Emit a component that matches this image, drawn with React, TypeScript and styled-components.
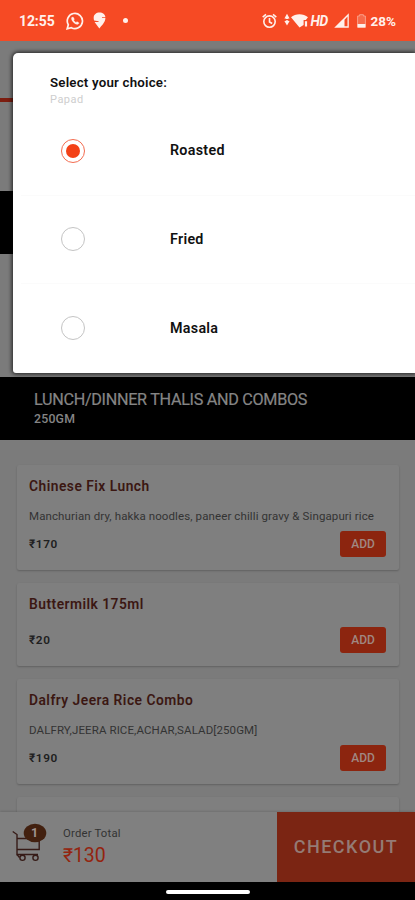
import React from "react";
import styled, { createGlobalStyle } from "styled-components";

const GlobalStyle = createGlobalStyle`
  * { box-sizing: border-box; }
  body { margin: 0; background: #7b7b7b; font-family: Roboto, "Liberation Sans", sans-serif; }
`;

const Screen = styled.div`
  position: relative;
  width: 415px;
  height: 900px;
  overflow: hidden;
  display: flex;
  flex-direction: column;
  background: #7b7b7b;
`;

const StatusBar = styled.header`
  flex: none;
  height: 41px;
  display: flex;
  align-items: center;
  padding: 0 19px 0 19px;
  background: #f64a24;
  color: #fff0eb;
  svg { display: block; flex: none; }
`;

const StatusText = styled.span<{ $size: number; $spacing?: number; $italic?: boolean; $left?: number }>`
  font-size: ${(p) => p.$size}px;
  line-height: 20px;
  font-weight: 700;
  font-style: ${(p) => (p.$italic ? "italic" : "normal")};
  letter-spacing: ${(p) => p.$spacing ?? 0}px;
  margin-left: ${(p) => p.$left ?? 0}px;
  padding-top: 1px;
`;

const StatusGroup = styled.div<{ $gap: number; $left?: number }>`
  display: flex;
  align-items: center;
  gap: ${(p) => p.$gap}px;
  margin-left: ${(p) => p.$left ?? 0}px;
`;

const StatusRight = styled.div`
  margin-left: auto;
  display: flex;
  align-items: center;
`;

const Dot = styled.span`
  width: 5px;
  height: 5px;
  border-radius: 50%;
  background: #fff0eb;
`;

const Backdrop = styled.section`
  flex: none;
  height: 336px;
  display: flex;
  flex-direction: column;
`;

const TabLine = styled.div`
  height: 4px;
  margin-top: 57px;
  background: #7c1d10;
`;

const BlackBand = styled.div`
  height: 63px;
  margin-top: 89px;
  background: #000;
`;

const SectionHeader = styled.div`
  flex: none;
  height: 63px;
  padding: 11px 34px 0;
  background: #000;
  color: #858585;
`;

const SectionTitle = styled.h2`
  margin: 0;
  font-size: 16.2px;
  line-height: 23px;
  font-weight: 400;
  letter-spacing: -0.3px;
  -webkit-text-stroke: 0.2px;
`;

const SectionSub = styled.div`
  font-size: 12.3px;
  line-height: 17px;
  font-weight: 500;
  letter-spacing: 0.2px;
`;

const List = styled.main`
  flex: 1;
  min-height: 0;
  overflow: hidden;
  display: flex;
  flex-direction: column;
  gap: 13px;
  padding: 25px 16px 0 17px;
`;

const Card = styled.article<{ $height: number }>`
  flex: none;
  height: ${(p) => p.$height}px;
  display: flex;
  flex-direction: column;
  padding: 11px 13px 13px 12px;
  border-radius: 2px;
  background: #7f7f7f;
  box-shadow: 0 1px 2px rgba(0, 0, 0, 0.22);
`;

const ItemName = styled.h3`
  margin: 0;
  font-size: 13.8px;
  line-height: 20px;
  font-weight: 600;
  letter-spacing: 0.48px;
  color: #3b1712;
`;

const ItemInfo = styled.p<{ $spacing: number }>`
  margin: 10px 0 0;
  font-size: 11.5px;
  line-height: 20px;
  letter-spacing: ${(p) => p.$spacing}px;
  white-space: nowrap;
  color: #333;
`;

const PriceRow = styled.div`
  margin-top: auto;
  display: flex;
  align-items: center;
  justify-content: space-between;
`;

const Price = styled.span`
  font-size: 11.8px;
  font-weight: 600;
  letter-spacing: 0.65px;
  color: #202020;
`;

const AddButton = styled.button`
  width: 46px;
  height: 26px;
  padding: 0;
  border: 0;
  border-radius: 3px;
  background: #8c250f;
  color: #a08882;
  font: 500 12px Roboto, sans-serif;
`;

const Footer = styled.footer`
  flex: none;
  height: 70px;
  display: flex;
  background: #808080;
  box-shadow: 0 -1px 2px rgba(0, 0, 0, 0.12);
`;

const CartBox = styled.div`
  width: 62px;
  padding: 11px 0 0 12px;
  svg { display: block; }
`;

const Totals = styled.div`
  flex: 1;
  padding: 13px 0 0 1px;
`;

const TotalLabel = styled.div`
  font-size: 11.3px;
  line-height: 17px;
  letter-spacing: 0.2px;
  color: #333;
`;

const TotalValue = styled.div`
  font-size: 19.5px;
  line-height: 27px;
  letter-spacing: -0.1px;
  color: #94240f;
`;

const Checkout = styled.button`
  width: 138px;
  border: 0;
  padding: 0 0 2px;
  background: #7b2513;
  color: #947b75;
  font: 500 18px Roboto, sans-serif;
  letter-spacing: 1.5px;
`;

const NavBar = styled.div`
  flex: none;
  height: 18px;
  display: flex;
  justify-content: center;
  padding-top: 8px;
  background: #000;
`;

const NavPill = styled.div`
  width: 84px;
  height: 4px;
  border-radius: 2px;
  background: #fff;
`;

const Dialog = styled.section`
  position: absolute;
  top: 53px;
  left: 13px;
  right: 0;
  height: 320px;
  border-radius: 5px 0 0 3px;
  background: #fff;
  box-shadow: 0 0 4px 1px rgba(0, 0, 0, 0.75);
`;

const DialogHead = styled.div`
  height: 54px;
  padding: 21px 0 0 37px;
`;

const DialogTitle = styled.div`
  font-size: 13.3px;
  line-height: 18px;
  font-weight: 600;
  letter-spacing: 0.2px;
  color: #111;
`;

const DialogSub = styled.div`
  font-size: 11px;
  line-height: 16px;
  letter-spacing: 0.5px;
  color: #cecece;
`;

const Option = styled.div`
  height: 88.5px;
  margin-left: 8px;
  padding: 0 0 0 40px;
  display: flex;
  align-items: center;
  border-bottom: 1px solid #fbfbfb;
  &:last-child { border-bottom: 0; }
`;

const Radio = styled.span<{ $checked: boolean }>`
  width: 24px;
  height: 24px;
  border: 1px solid ${(p) => (p.$checked ? "#f36c50" : "#c4c4c4")};
  border-radius: 50%;
  display: flex;
  align-items: center;
  justify-content: center;
  &::after {
    content: "";
    width: 14px;
    height: 14px;
    border-radius: 50%;
    background: ${(p) => (p.$checked ? "#f34117" : "transparent")};
  }
`;

const OptionLabel = styled.span`
  margin: -1px 0 0 85px;
  font-size: 14.3px;
  font-weight: 600;
  letter-spacing: 0.28px;
  color: #111;
`;

const WhatsApp = () => (
  <svg width="18" height="18" viewBox="0 0 18 18" fill="none" stroke="currentColor" strokeWidth="1.7">
    <path d="M1.2 16.8 2.3 12.8A7.6 7.6 0 1 1 5.3 15.7Z" />
    <path d="M5.8 5.3c-.9 1-.4 2.9 1.5 4.9 2 2 4 2.7 5 1.9l.9-1.1-2.2-1.4-1 .8c-.9-.4-1.9-1.4-2.3-2.3l.8-.9L7.2 4.9Z" fill="currentColor" strokeWidth=".2" />
  </svg>
);

const DeliveryPin = () => (
  <svg width="13" height="17" viewBox="0 0 13 17">
    <path d="M6.4 16.5C5 14.4 2.8 12 1.6 9.9h4V9.2L1.1 8.5C-.5 3.3 2.7.5 6.5.5c3.2 0 5.7 2 5.9 4.8H9v.6h3.4C12.5 10.4 8.2 13.9 6.4 16.5Z" fill="currentColor" />
  </svg>
);

const Alarm = () => (
  <svg width="15" height="16" viewBox="0 0 15 16" fill="none" stroke="currentColor" strokeWidth="1.6">
    <circle cx="7.5" cy="8.6" r="5.7" />
    <path d="M.7 4.1 4 1.4M14.3 4.1 11 1.4M7.5 5v4l2.7 1.5" />
  </svg>
);

const Wifi = () => (
  <svg width="25" height="15" viewBox="0 0 25 15" fill="currentColor">
    <path d="M3 .8 5.6 5.4H.4ZM3 12.6.4 8h5.2ZM1.8 5h2.4v1H1.8ZM1.8 7.2h2.4v1H1.8Z" />
    <path d="M7 4.3C11.4.3 19.5.3 24 4.3L21.8 7h-2.2v5L15.5 14.4Z" />
    <path d="M20.9 8.2h2.2v5.3h-2.2Z" />
  </svg>
);

const Signal = () => (
  <svg width="15" height="15" viewBox="0 0 14 14" fill="currentColor">
    <path fillRule="evenodd" d="M13.8.2V13.8H.2ZM12.6 3.2V12.4H9.8V6.2Z" />
  </svg>
);

const Battery = () => (
  <svg width="9" height="14" viewBox="0 0 9 14">
    <path d="M.6 2h2V.7h3.8V2h2v11.3H.6Z" fill="#f76a4a" stroke="#fa9d85" strokeWidth="1" />
    <path d="M.6 10h7.8v3.5H.6Z" fill="currentColor" />
  </svg>
);

const Cart = () => (
  <svg width="36" height="40" viewBox="0 0 36 40">
    <g fill="none" stroke="#361b17" strokeWidth="1.4">
      <path d="M.7 8.5 5 11.5V31.5H26M5 15.5H27.2V26.5H5" />
      <circle cx="10.5" cy="34.8" r="2.6" />
      <circle cx="23.5" cy="34.8" r="2.6" />
      <path d="M5 31.5 7.5 34.5" />
    </g>
    <ellipse cx="23" cy="10" rx="11.3" ry="9.3" fill="#42200f" />
    <text x="22.7" y="14.4" textAnchor="middle" fontFamily="Roboto, sans-serif" fontSize="12.5" fontWeight="700" fill="#a09490">1</text>
  </svg>
);

const choices = ["Roasted", "Fried", "Masala"];

const items = [
  { name: "Chinese Fix Lunch", info: "Manchurian dry, hakka noodles, paneer chilli gravy & Singapuri rice", infoSpacing: 0.11, price: "₹170", height: 105 },
  { name: "Buttermilk 175ml", price: "₹20", height: 83 },
  { name: "Dalfry Jeera Rice Combo", info: "DALFRY,JEERA RICE,ACHAR,SALAD[250GM]", infoSpacing: 0.1, price: "₹190", height: 105 },
];

export default function App() {
  return (
    <Screen>
      <GlobalStyle />
      <StatusBar>
        <StatusText $size={14} $spacing={-0.1}>12:55</StatusText>
        <StatusGroup $gap={9} $left={11}>
          <WhatsApp />
          <DeliveryPin />
        </StatusGroup>
        <StatusGroup $gap={0} $left={17}><Dot /></StatusGroup>
        <StatusRight>
          <Alarm />
          <StatusGroup $gap={2} $left={7}>
            <Wifi />
            <StatusText $size={13.8} $italic $spacing={-0.6}>HD</StatusText>
          </StatusGroup>
          <StatusGroup $gap={8} $left={6}>
            <Signal />
            <Battery />
          </StatusGroup>
          <StatusText $size={13.5} $left={5}>28%</StatusText>
        </StatusRight>
      </StatusBar>
      <Backdrop>
        <TabLine />
        <BlackBand />
      </Backdrop>
      <SectionHeader>
        <SectionTitle>LUNCH/DINNER THALIS AND COMBOS</SectionTitle>
        <SectionSub>250GM</SectionSub>
      </SectionHeader>
      <List>
        {items.map((item) => (
          <Card key={item.name} $height={item.height}>
            <ItemName>{item.name}</ItemName>
            {item.info && <ItemInfo $spacing={item.infoSpacing ?? 0}>{item.info}</ItemInfo>}
            <PriceRow>
              <Price>{item.price}</Price>
              <AddButton>ADD</AddButton>
            </PriceRow>
          </Card>
        ))}
        <Card $height={105} />
      </List>
      <Footer>
        <CartBox><Cart /></CartBox>
        <Totals>
          <TotalLabel>Order Total</TotalLabel>
          <TotalValue>₹130</TotalValue>
        </Totals>
        <Checkout>CHECKOUT</Checkout>
      </Footer>
      <NavBar><NavPill /></NavBar>
      <Dialog>
        <DialogHead>
          <DialogTitle>Select your choice:</DialogTitle>
          <DialogSub>Papad</DialogSub>
        </DialogHead>
        {choices.map((choice, index) => (
          <Option key={choice}>
            <Radio $checked={index === 0} />
            <OptionLabel>{choice}</OptionLabel>
          </Option>
        ))}
      </Dialog>
    </Screen>
  );
}
